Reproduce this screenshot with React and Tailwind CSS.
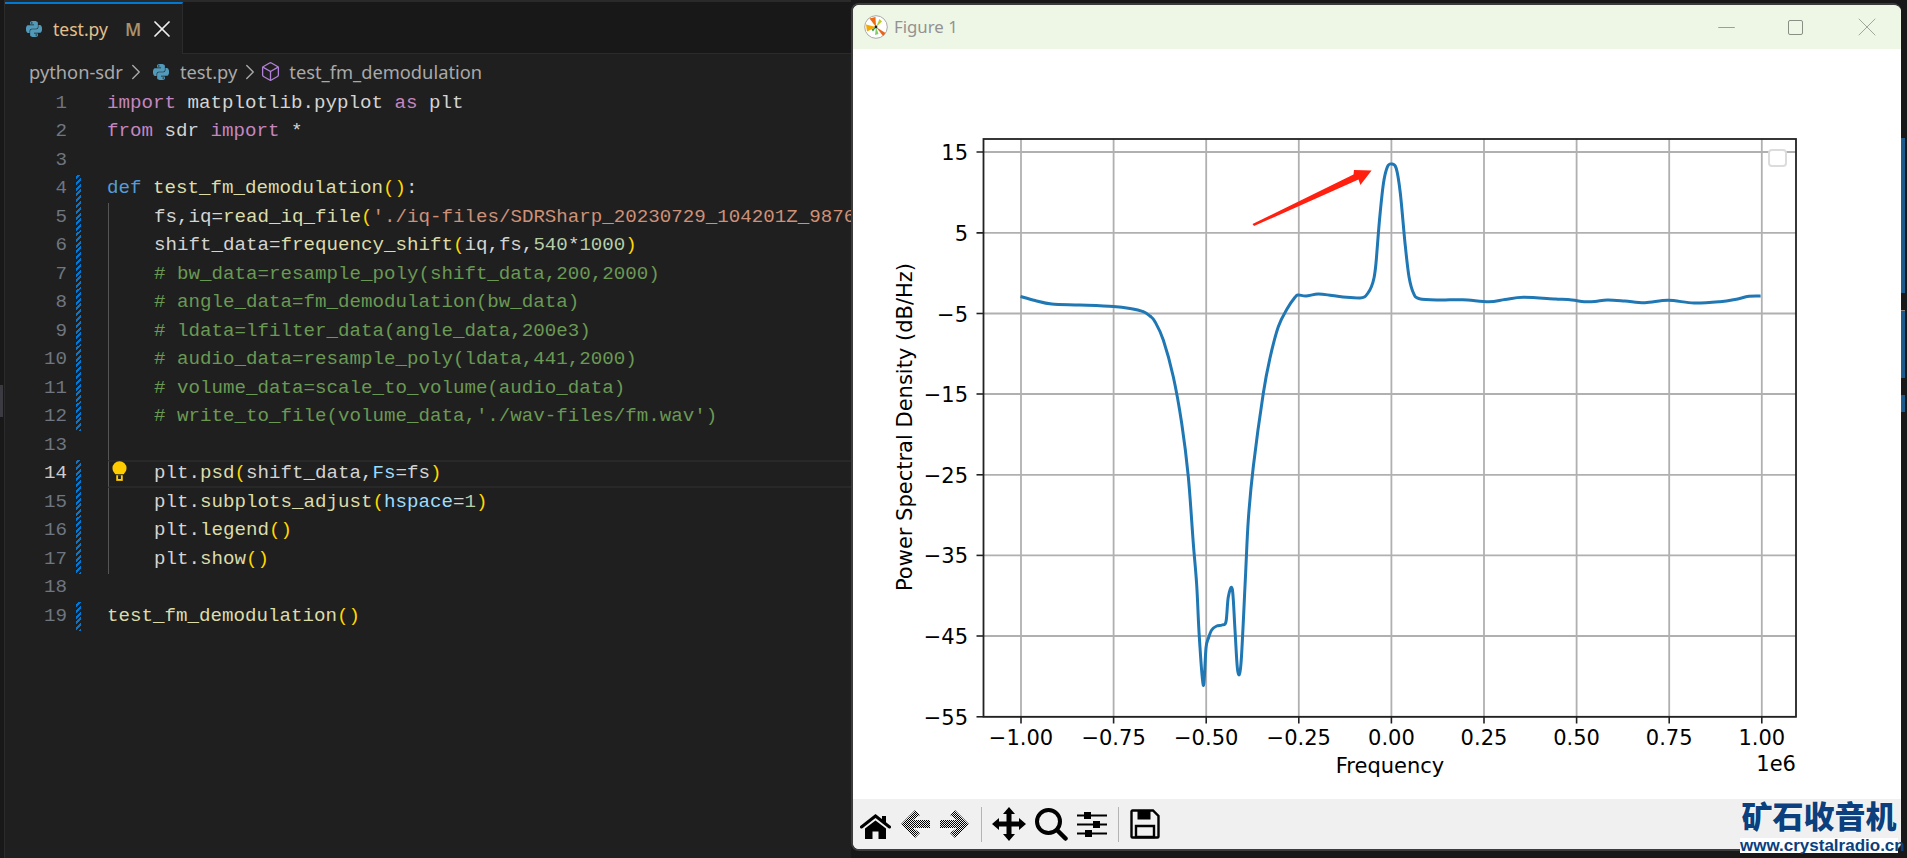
import { Box, ChevronRight, X, Minus } from "lucide-react";
import { SiPython } from "react-icons/si";

const kw = "text-[#c586c0]";
const blue = "text-[#569cd6]";
const fn = "text-[#dcdcaa]";
const par = "text-[#ffd700]";
const str = "text-[#ce9178]";
const com = "text-[#6a9955]";
const prm = "text-[#9cdcfe]";
const num = "text-[#b5cea8]";
const txt = "text-[#d4d4d4]";

const codeLines = [
  { toks: [["import", kw], [" matplotlib.pyplot ", txt], ["as", kw], [" plt", txt]] },
  { toks: [["from", kw], [" sdr ", txt], ["import", kw], [" *", txt]] },
  { toks: [] },
  { bar: true, toks: [["def", blue], [" ", txt], ["test_fm_demodulation", fn], ["()", par], [":", txt]] },
  { bar: true, guide: true, toks: [["fs,iq=", txt], ["read_iq_file", fn], ["(", par], ["'./iq-files/SDRSharp_20230729_104201Z_9876", str]] },
  { bar: true, guide: true, toks: [["shift_data=", txt], ["frequency_shift", fn], ["(", par], ["iq,fs,", txt], ["540", num], ["*", txt], ["1000", num], [")", par]] },
  { bar: true, guide: true, toks: [["# bw_data=resample_poly(shift_data,200,2000)", com]] },
  { bar: true, guide: true, toks: [["# angle_data=fm_demodulation(bw_data)", com]] },
  { bar: true, guide: true, toks: [["# ldata=lfilter_data(angle_data,200e3)", com]] },
  { bar: true, guide: true, toks: [["# audio_data=resample_poly(ldata,441,2000)", com]] },
  { bar: true, guide: true, toks: [["# volume_data=scale_to_volume(audio_data)", com]] },
  { bar: true, guide: true, toks: [["# write_to_file(volume_data,'./wav-files/fm.wav')", com]] },
  { guide: true, toks: [] },
  { bar: true, guide: true, active: true, toks: [["plt.", txt], ["psd", fn], ["(", par], ["shift_data,", txt], ["Fs", prm], ["=fs", txt], [")", par]] },
  { bar: true, guide: true, toks: [["plt.", txt], ["subplots_adjust", fn], ["(", par], ["hspace", prm], ["=", txt], ["1", num], [")", par]] },
  { bar: true, guide: true, toks: [["plt.", txt], ["legend", fn], ["()", par]] },
  { bar: true, guide: true, toks: [["plt.", txt], ["show", fn], ["()", par]] },
  { toks: [] },
  { bar: true, toks: [["test_fm_demodulation", fn], ["()", par]] },
];

const gridX = [1021, 1113.6, 1206.2, 1298.8, 1391.4, 1484, 1576.6, 1669.2, 1761.8];
const xLabels = ["−1.00", "−0.75", "−0.50", "−0.25", "0.00", "0.25", "0.50", "0.75", "1.00"];
const gridY = [152, 232.9, 313.5, 394, 474.8, 555.4, 636, 716.8];
const yLabels = ["15", "5", "−5", "−15", "−25", "−35", "−45", "−55"];

const curve = [
  [1020.5, 296.5], [1035, 300.5], [1051.7, 304], [1080, 305], [1113.3, 306.5], [1130, 308.5], [1143.3, 311.7], [1150, 316],
  [1155, 321.7], [1163.3, 340], [1173.3, 376.7], [1181.7, 423.3], [1188.3, 476.7], [1193.3, 543.3], [1196.7, 585],
  [1199.3, 636.7], [1203.3, 685.3], [1206, 648], [1208.5, 638], [1211.7, 630], [1216.7, 626], [1222, 625], [1226, 621.7],
  [1228.3, 597], [1232.3, 589], [1235, 630], [1237.7, 670.7], [1241, 663.3], [1245.3, 580], [1248.3, 520], [1253.3, 466.7],
  [1263.3, 393.3], [1270, 358], [1278.3, 326.7], [1287, 309], [1295, 297.3], [1298.3, 295], [1306, 296], [1318.3, 294],
  [1332, 295.5], [1346.7, 297.3], [1360, 298], [1364.4, 297], [1368, 293], [1371.4, 286.7], [1374, 278], [1376, 263], [1379.5, 220],
  [1383.5, 183], [1387.5, 166.7], [1391.6, 164], [1396.2, 168.3], [1400.3, 193], [1405, 243], [1409, 276.7], [1413.6, 293.3],
  [1419.4, 298.7], [1439.6, 300], [1462.7, 299.7], [1488.8, 301.7], [1505, 299.5], [1523.5, 297.3], [1555.3, 299], [1572, 300],
  [1584.2, 301.7], [1595, 301.5], [1607.4, 300], [1625, 301], [1645, 302.7], [1668, 300.3], [1694, 303], [1720, 301.7], [1735, 299.5], [1749, 296.3], [1760.6, 296],
];

// catmull-rom through the traced points, so the peak stays round
function smoothPath(pts) {
  let d = `M${pts[0][0]} ${pts[0][1]}`;
  for (let i = 0; i < pts.length - 1; i++) {
    const p0 = pts[i - 1] || pts[i];
    const p1 = pts[i];
    const p2 = pts[i + 1];
    const p3 = pts[i + 2] || p2;
    const c1x = p1[0] + (p2[0] - p0[0]) / 6;
    const c1y = p1[1] + (p2[1] - p0[1]) / 6;
    const c2x = p2[0] - (p3[0] - p1[0]) / 6;
    const c2y = p2[1] - (p3[1] - p1[1]) / 6;
    d += ` C${c1x} ${c1y} ${c2x} ${c2y} ${p2[0]} ${p2[1]}`;
  }
  return d;
}

const Bulb = () => (
  <svg className="absolute left-[107px] top-[1px]" width="15" height="21" viewBox="0 0 16 22">
    <path d="M8 0a7.5 7.5 0 0 0-7.5 7.5c0 3 2 4.6 3 6.5h9c1-1.9 3-3.5 3-6.5A7.5 7.5 0 0 0 8 0z" fill="#ffcc00" />
    <path d="M4.5 15h7v6h-7z" fill="#ffcc00" />
    <path d="M6.5 15h3v4h-3z" fill="#1f1f1f" />
  </svg>
);

const CodeLine = ({ line, n }) => (
  <div className="relative flex h-[28.5px] items-center">
    <span className={`w-[62px] text-right ${line.active ? "text-[#cccccc]" : "text-[#6e7681]"}`}>{n}</span>
    <span
      className={`ml-[9px] h-full w-[5px] flex-none ${
        line.bar
          ? "bg-[repeating-linear-gradient(-45deg,#0078d4_0px,#0078d4_2px,#1f1f1f_2px,#1f1f1f_4px)]"
          : ""
      }`}
    />
    <div
      className={`flex h-full min-w-0 flex-1 items-center whitespace-pre ${
        line.guide ? "ml-[27px] border-l border-[#555555] pl-[45px]" : "ml-[26px]"
      } ${line.active ? "border-y-2 border-y-[#282828]" : ""}`}
    >
      {line.toks.map((t, i) => (
        <span key={i} className={t[1]}>{t[0]}</span>
      ))}
    </div>
    {line.active && <Bulb />}
  </div>
);

const Editor = () => (
  <div className="flex w-[847px] flex-none flex-col border-l border-[#2b2b2b]">
    <div className="h-[2px] bg-[#2a2a2a]" />
    <div className="flex h-[52px] flex-none border-b border-[#2b2b2b]">
      <div className="mb-[-1px] flex w-[178px] flex-none items-center border-r border-t-2 border-r-[#2b2b2b] border-t-[#0078d4] bg-[#1f1f1f] pl-[21px]">
        <SiPython size={16} className="text-[#519aba]" />
        <span className="ml-[11px] text-[#e2c08d]">test.py</span>
        <span className="ml-[17px] font-semibold text-[#a8916b]">M</span>
        <X size={28} strokeWidth={1.5} className="ml-[7px] flex-none text-[#eeeeee]" />
      </div>
    </div>
    <div className="flex min-h-0 flex-1 flex-col overflow-hidden bg-[#1f1f1f]">
      <div className="flex h-[35px] flex-none items-center pl-[24px] text-[18.3px] text-[#a9a9a9]">
        <span>python-sdr</span>
        <ChevronRight size={26} strokeWidth={1.3} className="mr-[-3px] text-[#a9a9a9]" />
        <SiPython size={16} className="ml-[7px] text-[#519aba]" />
        <span className="ml-[11px]">test.py</span>
        <ChevronRight size={26} strokeWidth={1.3} className="mr-[-3px] text-[#a9a9a9]" />
        <Box size={21} strokeWidth={1.5} className="text-[#b180d7]" />
        <span className="ml-[8px]">test_fm_demodulation</span>
      </div>
      <div className="font-['Liberation_Mono',monospace] text-[19.17px]">
        {codeLines.map((line, i) => (
          <CodeLine key={i} line={line} n={i + 1} />
        ))}
      </div>
    </div>
  </div>
);

const MplLogo = () => (
  <svg width="24" height="24" viewBox="0 0 24 24">
    <circle cx="12" cy="12" r="11.3" fill="#ffffff" stroke="#a8a8a8" />
    <path d="M12 12 L5.5 3.5 L11.5 2z" fill="#f06a10" />
    <path d="M12 12 L2 9.5 L3 16.5z" fill="#f5a800" />
    <path d="M12 12 L18 6.5 L15.5 4z" fill="#b5cf2a" />
    <path d="M12 12 L21.5 18 L19 21z" fill="#e8641b" />
    <path d="M12 12 L7.5 14.5 L9 16.5z" fill="#2a9a4a" />
    <path d="M12 12 L11 20 L14.5 19z" fill="#7ccf6a" />
    <circle cx="12" cy="12" r="1.4" fill="#222222" />
  </svg>
);

const Plot = () => (
  <svg className="block" width="1049" height="750" viewBox="853 49 1049 750" fontFamily="'DejaVu Sans', sans-serif" fontSize="21">
    {gridX.map((x) => (
      <line key={x} x1={x} x2={x} y1="139" y2="716.8" stroke="#b0b0b0" strokeWidth="1.8" />
    ))}
    {gridY.map((y) => (
      <line key={y} x1="983.5" x2="1796" y1={y} y2={y} stroke="#b0b0b0" strokeWidth="1.8" />
    ))}
    <path d={smoothPath(curve)} fill="none" stroke="#1f77b4" strokeWidth="3" strokeLinejoin="round" />
    <rect x="983.5" y="139" width="812.5" height="577.8" fill="none" stroke="#222222" strokeWidth="1.8" />
    <rect x="1769" y="150" width="17" height="16" rx="3" fill="#ffffff" stroke="#dcdcdc" strokeWidth="2" />
    <polygon points="1252.5,224 1353.5,174.5 1354,170 1371.6,170.6 1360.4,185 1358.5,179.5 1254,226" fill="#ff2010" />
    {gridX.map((x, i) => (
      <g key={x}>
        <line x1={x} x2={x} y1="716.8" y2="723.5" stroke="#222222" strokeWidth="1.6" />
        <text x={x} y="745" textAnchor="middle" fill="#000000">{xLabels[i]}</text>
      </g>
    ))}
    {gridY.map((y, i) => (
      <g key={y}>
        <line x1="976.5" x2="983.5" y1={y} y2={y} stroke="#222222" strokeWidth="1.6" />
        <text x="968" y={y + 8} textAnchor="end" fill="#000000">{yLabels[i]}</text>
      </g>
    ))}
    <text x="1390" y="773" textAnchor="middle" fill="#000000">Frequency</text>
    <text x="1796" y="771" textAnchor="end" fill="#000000">1e6</text>
    <text x="912" y="427" textAnchor="middle" fill="#000000" transform="rotate(-90 912 427)">Power Spectral Density (dB/Hz)</text>
  </svg>
);

const Dither = ({ id }) => (
  <pattern id={id} width="2" height="2" patternUnits="userSpaceOnUse">
    <rect width="1" height="1" fill="#000000" />
    <rect x="1" y="1" width="1" height="1" fill="#000000" />
  </pattern>
);

const Toolbar = () => (
  <div className="flex h-[50px] flex-none items-center bg-[#f0f0f0] pl-[7px]">
    <svg width="31" height="25" viewBox="0 0 31 25" className="mt-[5px]">
      <path d="M1.5 13 L15.5 2 L29.5 13" fill="none" stroke="#000000" strokeWidth="3" strokeLinecap="round" />
      <path d="M22 2h4v7h-4z" fill="#000000" />
      <path d="M5 14.5 L15.5 6.5 L26 14.5 V25 H18.5 V17.5 H12.5 V25 H5z" fill="#000000" />
    </svg>
    <svg width="29" height="30" viewBox="0 0 29 30" className="ml-[10px]">
      <defs><Dither id="d1" /></defs>
      <path d="M0 15 L14 1 L19 6 L12 11 H29 V19 H12 L19 24 L14 29z" fill="url(#d1)" />
    </svg>
    <svg width="29" height="30" viewBox="0 0 29 30" className="ml-[10px]">
      <defs><Dither id="d2" /></defs>
      <path d="M29 15 L15 1 L10 6 L17 11 H0 V19 H17 L10 24 L15 29z" fill="url(#d2)" />
    </svg>
    <div className="ml-[12px] h-[35px] w-px bg-[#b4b4b4]" />
    <svg width="34" height="34" viewBox="0 0 34 34" className="ml-[10px]">
      <path d="M17 0 L23 7 H19.5 V14.5 H27 V11 L34 17 L27 23 V19.5 H19.5 V27 H23 L17 34 L11 27 H14.5 V19.5 H7 V23 L0 17 L7 11 V14.5 H14.5 V7 H11z" fill="#000000" />
    </svg>
    <svg width="33" height="33" viewBox="0 0 33 33" className="ml-[9px]">
      <circle cx="13.5" cy="13.5" r="11.5" fill="none" stroke="#000000" strokeWidth="4" />
      <path d="M22 22 L30.5 30.5" stroke="#000000" strokeWidth="4.5" strokeLinecap="round" />
    </svg>
    <svg width="30" height="27" viewBox="0 0 30 27" className="ml-[9px]">
      <path d="M0 4.5h30M0 13.5h30M0 22.5h30" stroke="#000000" strokeWidth="2" />
      <path d="M7 1h7v7H7zM16 10h7v7h-7zM8 19h7v7H8z" fill="#000000" />
    </svg>
    <div className="ml-[11px] h-[35px] w-px bg-[#b4b4b4]" />
    <svg width="30" height="30" viewBox="0 0 30 30" className="ml-[11px]">
      <path d="M1.5 2.5a1 1 0 0 1 1-1H23l5.5 5.5v20.5a1 1 0 0 1-1 1h-25a1 1 0 0 1-1-1z" fill="none" stroke="#000000" strokeWidth="2.4" />
      <path d="M7.5 1.5h13v9h-13z" fill="#000000" />
      <path d="M6 17h18v11H6z" fill="none" stroke="#000000" strokeWidth="2.4" />
    </svg>
  </div>
);

const FigureWindow = () => (
  <div className="mt-[3px] flex h-[848px] w-[1050px] flex-none flex-col overflow-hidden rounded-[8px] border-y-2 border-l-2 border-[#3c3c3c] bg-white">
    <div className="flex h-[44px] flex-none items-center bg-[#eef6e6] pl-[11px]">
      <MplLogo />
      <span className="ml-[6px] text-[16.8px] text-[#929292]">Figure 1</span>
      <div className="ml-auto mr-[18px] flex items-center text-[#9aa095]">
        <Minus size={27} strokeWidth={0.9} />
        <div className="ml-[48px] h-[15px] w-[15px] rounded-[2px] border border-[#8a8f85]" />
        <X size={32} strokeWidth={0.7} className="ml-[48px]" />
      </div>
    </div>
    <div className="min-h-0 flex-1">
      <Plot />
    </div>
    <Toolbar />
  </div>
);

const Watermark = () => (
  <div className="absolute bottom-[5px] right-[9px] flex w-[158px] flex-col items-center">
    <div className="font-['Noto_Sans_CJK_SC',sans-serif] text-[31px] font-black leading-[36px] text-[#0b3f7d] [text-shadow:0_0_2px_#ffffff]">矿石收音机</div>
    <div className="mt-[5px] w-full whitespace-nowrap bg-white text-center font-['Liberation_Sans',sans-serif] text-[17px] font-bold leading-[15px] text-[#0b3f7d]">www.crystalradio.cn</div>
  </div>
);

export default function App() {
  return (
    <div className="relative flex h-[858px] w-[1907px] overflow-hidden bg-[#181818] font-['Noto_Sans',sans-serif] text-[17.5px]">
      <div className="w-[4px] flex-none">
        <div className="mt-[385px] h-[32px] w-[3px] bg-[#3a3a40]" />
      </div>
      <Editor />
      <FigureWindow />
      <div className="flex flex-1 flex-col pt-[138px]">
        <div className="h-[155px] w-[4px] bg-[#1b5a8a]" />
        <div className="mt-[17px] h-[68px] w-[4px] border-t border-t-[#888888] bg-[#1b5a8a]" />
        <div className="mt-[17px] h-[17px] w-[4px] bg-[#1b5a8a]" />
      </div>
      <Watermark />
    </div>
  );
}
